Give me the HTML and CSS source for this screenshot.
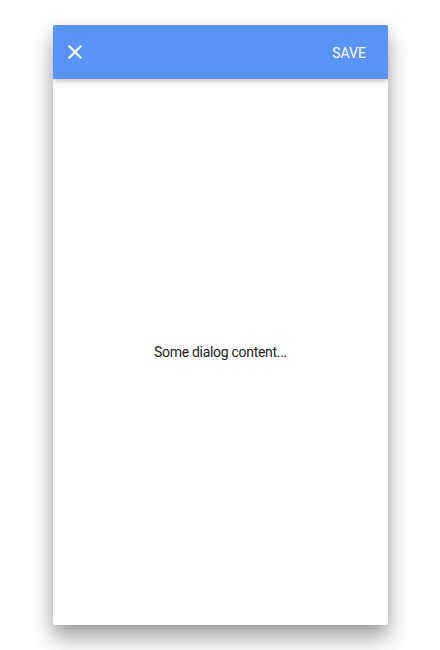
FILE: index.html
```html
<!DOCTYPE html>
<html>
<head>
<meta charset="utf-8">
<link rel="stylesheet" href="styles.css">
</head>
<body>
<div class="page">
  <div class="dialog">
    <div class="toolbar">
      <button class="icon-btn" aria-label="Close">
        <svg width="24" height="24" viewBox="0 0 24 24"><path d="M19 6.41L17.59 5 12 10.59 6.41 5 5 6.41 10.59 12 5 17.59 6.41 19 12 13.41 17.59 19 19 17.59 13.41 12z" fill="#fff"/></svg>
      </button>
      <button class="save-btn">SAVE</button>
    </div>
    <div class="content">Some dialog content...</div>
  </div>
</div>
</body>
</html>
```
FILE: styles.css
```css
html, body {
  margin: 0;
  padding: 0;
  background: #fff;
  font-family: Roboto, "Noto Sans", sans-serif;
}
.page {
  width: 440px;
  height: 650px;
  padding-top: 25px;
  padding-left: 53px;
  box-sizing: border-box;
}
.dialog {
  width: 335px;
  height: 600px;
  background: #fff;
  border-radius: 2px;
  display: flex;
  flex-direction: column;
  box-shadow: 0 14px 22px rgba(0,0,0,0.32), 0 4px 14px rgba(0,0,0,0.12);
  overflow: hidden;
}
.toolbar {
  height: 54px;
  flex: none;
  background: #5a93f7;
  display: flex;
  align-items: center;
  justify-content: space-between;
  padding: 0 14px 0 10px;
  box-shadow: 0 2px 6px rgba(0,0,0,0.25);
  position: relative;
  z-index: 1;
}
.icon-btn {
  width: 24px;
  height: 24px;
  padding: 0;
  border: 0;
  background: none;
  display: flex;
}
.save-btn {
  border: 0;
  background: none;
  color: #fff;
  font-family: Roboto, sans-serif;
  font-size: 14px;
  padding: 0 8px;
  margin-top: 1px;
}
.content {
  flex: 1;
  display: flex;
  align-items: center;
  justify-content: center;
  font-size: 14px;
  letter-spacing: -0.3px;
  color: #212121;
}
```
